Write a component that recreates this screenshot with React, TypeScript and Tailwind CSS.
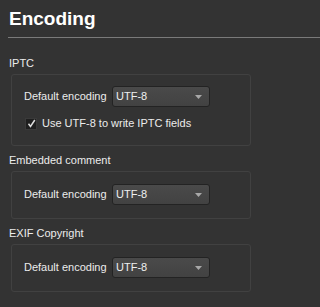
import { ReactNode } from "react";

const font = { fontFamily: '"Liberation Sans", Arial, sans-serif' };

function Dropdown({ value }: { value: string }) {
  return (
    <div className="relative flex h-[21px] w-[98px] items-center rounded-[3px] border border-[#232323] bg-gradient-to-b from-[#4a4a4a] to-[#424242] pl-[3px] text-[11px] text-[#f0f0f0]">
      {value}
      <svg
        className="absolute right-[7px] top-[8px]"
        width="7"
        height="4"
        viewBox="0 0 7 4"
        aria-hidden
      >
        <path d="M0 0h7L3.5 4z" fill="#a8a8a8" />
      </svg>
    </div>
  );
}

function EncodingRow() {
  return (
    <div className="flex items-center">
      <span className="w-[88px] text-[11px] leading-[13px] text-[#ececec]">
        Default encoding
      </span>
      <Dropdown value="UTF-8" />
    </div>
  );
}

function Group({ label, children, className }: { label: string; children: ReactNode; className: string }) {
  return (
    <section>
      <div className="pl-[9px] text-[11px] leading-[13px] text-[#ececec]">{label}</div>
      <div
        className={`ml-[11px] mt-[4px] w-[240px] rounded-[3px] border border-[#414141] pl-[12px] ${className}`}
      >
        {children}
      </div>
    </section>
  );
}

export default function App() {
  return (
    <div className="h-[307px] w-full min-w-[230px] overflow-hidden bg-[#333333]" style={font}>
      <h1 className="pl-[9px] pt-2 text-[19px] font-bold leading-[22px] text-white">
        Encoding
      </h1>
      <div className="ml-2 mt-[7px] h-px bg-[#7a7a7a]" />

      <div className="mt-[19px] space-y-[8px]">
        <Group label="IPTC" className="pb-[15px] pt-[11px]">
          <EncodingRow />
          <label className="mt-[10px] flex items-center gap-[5px] pl-px text-[11px] leading-[13px] text-[#ececec]">
            <span className="flex h-[12px] w-[12px] items-center justify-center border border-[#3a3a3a] bg-[#1f1f1f]">
              <svg width="9" height="9" viewBox="0 0 9 9" aria-hidden>
                <path
                  d="M1.5 4.8l2 2.6L7.8 1"
                  fill="none"
                  stroke="#dedede"
                  strokeWidth="1.5"
                />
              </svg>
            </span>
            Use UTF-8 to write IPTC fields
          </label>
        </Group>

        <Group label="Embedded comment" className="pb-[13px] pt-[12px]">
          <EncodingRow />
        </Group>

        <Group label="EXIF Copyright" className="pb-[13px] pt-[12px]">
          <EncodingRow />
        </Group>
      </div>
    </div>
  );
}
